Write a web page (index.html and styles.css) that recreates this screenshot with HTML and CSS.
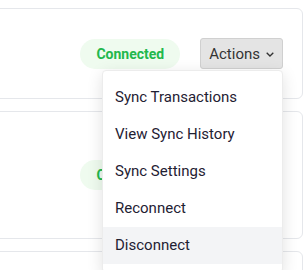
FILE: index.html
```html
<!DOCTYPE html>
<html lang="en">
<head>
    <meta charset="UTF-8">
    <meta name="viewport" content="width=device-width, initial-scale=1.0">
    <title>Integrations</title>
    <link rel="stylesheet" href="styles.css">
</head>
<body>

<div class="card-list">
    <!-- First integration -->
    <div class="card card-short">
        <div class="card-actions">
            <span class="status-badge">Connected</span>
            <div class="dropdown">
                <button class="actions-btn">Actions
                    <svg class="chevron" width="8" height="5" viewBox="0 0 8 5"><path d="M0.7 0.7l3.3 3.3 3.3-3.3" fill="none" stroke="#333" stroke-width="1.3"/></svg>
                </button>
                <div class="dropdown-menu">
                    <div class="menu-item">Sync Transactions</div>
                    <div class="menu-item">View Sync History</div>
                    <div class="menu-item">Sync Settings</div>
                    <div class="menu-item">Reconnect</div>
                    <div class="menu-item active">Disconnect</div>
                </div>
            </div>
        </div>
    </div>

    <!-- Second integration -->
    <div class="card card-tall">
        <div class="card-actions">
            <span class="status-badge">Connected</span>
            <div class="dropdown">
                <button class="actions-btn">Actions
                    <svg class="chevron" width="8" height="5" viewBox="0 0 8 5"><path d="M0.7 0.7l3.3 3.3 3.3-3.3" fill="none" stroke="#333" stroke-width="1.3"/></svg>
                </button>
            </div>
        </div>
    </div>

    <div class="card card-tall"></div>
</div>

</body>
</html>
```

FILE: styles.css
```css
html, body {
    margin: 0;
    padding: 0;
    overflow: hidden;
}

body {
    font-family: Roboto, "Liberation Sans", sans-serif;
    background: #ffffff;
}

/* Cards */
.card-list {
    display: flex;
    flex-direction: column;
    gap: 12px;
    margin: 8px 2px 0 -20px;
}

.card {
    background: white;
    border: 1px solid #e5e7eb;
    border-radius: 6px;
    display: flex;
    align-items: center;
    justify-content: flex-end;
    padding: 0 19px;
}

.card-short {
    height: 89px;
}

.card-tall {
    height: 126px;
}

.card-actions {
    display: flex;
    align-items: center;
    gap: 20px;
}

/* Status badge */
.status-badge {
    display: inline-flex;
    align-items: center;
    height: 30px;
    padding: 0 16px;
    border-radius: 15px;
    background: #effbef;
    color: #22b84c;
    font-weight: bold;
    font-size: 14px;
}

/* Actions dropdown */
.dropdown {
    position: relative;
}

.actions-btn {
    display: flex;
    align-items: center;
    gap: 6px;
    height: 31px;
    padding: 0 8px;
    background: #e4e4e4;
    border: 1px solid #d0d0d0;
    border-radius: 3px;
    font-family: inherit;
    font-size: 15px;
    color: #333;
    cursor: pointer;
}

.chevron {
    margin-top: 1px;
}

.dropdown-menu {
    position: absolute;
    top: 32px;
    right: 0;
    width: 179px;
    padding: 8px 0;
    background: white;
    border: 1px solid #ececec;
    border-radius: 4px;
    box-shadow: 0 4px 16px rgba(0, 0, 0, 0.12);
    z-index: 10;
}

.menu-item {
    height: 37px;
    line-height: 37px;
    padding: 0 12px;
    font-size: 15px;
    color: #1f2133;
    white-space: nowrap;
}

.menu-item.active {
    background: #f3f4f6;
}
```
